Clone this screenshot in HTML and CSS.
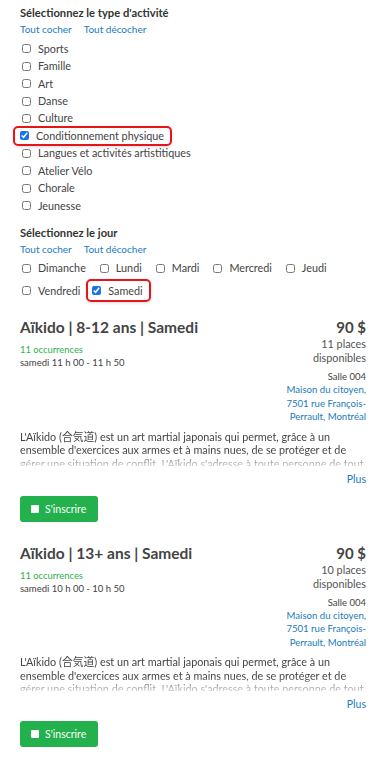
FILE: index.html
```html
<!DOCTYPE html>
<html lang="fr">

<head>
    <meta charset="UTF-8">
    <meta name="viewport" content="width=device-width, initial-scale=1.0">
    <title>Activités</title>
    <link rel="stylesheet" href="styles.css">
</head>

<body>
    <div class="page">
        <div class="filter">
            <h3 class="filter-title">Sélectionnez le type d'activité</h3>
            <div class="filter-links">
                <a href="#">Tout cocher</a>
                <a href="#">Tout décocher</a>
            </div>
            <ul class="option-list">
                <li><label class="option"><input type="checkbox">Sports</label></li>
                <li><label class="option"><input type="checkbox">Famille</label></li>
                <li><label class="option"><input type="checkbox">Art</label></li>
                <li><label class="option"><input type="checkbox">Danse</label></li>
                <li><label class="option"><input type="checkbox">Culture</label></li>
                <li><label class="option highlight"><input type="checkbox" checked>Conditionnement physique</label></li>
                <li><label class="option"><input type="checkbox">Langues et activités artistitiques</label></li>
                <li><label class="option"><input type="checkbox">Atelier Vélo</label></li>
                <li><label class="option"><input type="checkbox">Chorale</label></li>
                <li><label class="option"><input type="checkbox">Jeunesse</label></li>
            </ul>
        </div>

        <div class="filter">
            <h3 class="filter-title">Sélectionnez le jour</h3>
            <div class="filter-links">
                <a href="#">Tout cocher</a>
                <a href="#">Tout décocher</a>
            </div>
            <div class="day-list">
                <label class="option"><input type="checkbox">Dimanche</label>
                <label class="option"><input type="checkbox">Lundi</label>
                <label class="option"><input type="checkbox">Mardi</label>
                <label class="option"><input type="checkbox">Mercredi</label>
                <label class="option"><input type="checkbox">Jeudi</label>
                <label class="option"><input type="checkbox">Vendredi</label>
                <label class="option highlight"><input type="checkbox" checked>Samedi</label>
            </div>
        </div>

        <div class="course">
            <div class="course-head">
                <div class="course-main">
                    <h2 class="course-title">Aïkido | 8-12 ans | Samedi</h2>
                    <div class="occurrences">11 occurrences</div>
                    <div class="schedule">samedi 11 h 00 - 11 h 50</div>
                </div>
                <div class="course-side">
                    <div class="price">90 $</div>
                    <div class="places">11 places disponibles</div>
                    <div class="room">Salle 004</div>
                    <a class="address" href="#">Maison du citoyen, 7501 rue François-Perrault, Montréal</a>
                </div>
            </div>
            <p class="description">L'Aïkido (合気道) est un art martial japonais qui permet, grâce à un ensemble d'exercices aux armes et à mains nues, de se protéger et de gérer une situation de conflit. L'Aïkido s'adresse à toute personne de tout âge désirant apprendre.</p>
            <div class="more"><a href="#">Plus</a></div>
            <button class="register"><span class="register-box"></span>S'inscrire</button>
        </div>

        <div class="course">
            <div class="course-head">
                <div class="course-main">
                    <h2 class="course-title">Aïkido | 13+ ans | Samedi</h2>
                    <div class="occurrences">11 occurrences</div>
                    <div class="schedule">samedi 10 h 00 - 10 h 50</div>
                </div>
                <div class="course-side">
                    <div class="price">90 $</div>
                    <div class="places">10 places disponibles</div>
                    <div class="room">Salle 004</div>
                    <a class="address" href="#">Maison du citoyen, 7501 rue François-Perrault, Montréal</a>
                </div>
            </div>
            <p class="description">L'Aïkido (合気道) est un art martial japonais qui permet, grâce à un ensemble d'exercices aux armes et à mains nues, de se protéger et de gérer une situation de conflit. L'Aïkido s'adresse à toute personne de tout âge désirant apprendre.</p>
            <div class="more"><a href="#">Plus</a></div>
            <button class="register"><span class="register-box"></span>S'inscrire</button>
        </div>
    </div>
</body>

</html>
```

FILE: styles.css
```css
body {
    margin: 0;
    background-color: #fff;
    font-family: Lato, "Noto Sans CJK JP", sans-serif;
    color: #444;
}

a {
    color: #1a7bbd;
    text-decoration: none;
}

.page {
    padding: 5px 24px 0 20px;
}

.filter {
    margin-bottom: 11px;
}

.filter-title {
    margin: 0;
    font-size: 11.2px;
    font-weight: bold;
    color: #333;
    line-height: 16px;
}

.filter-links {
    font-size: 10px;
    line-height: 17px;
    display: flex;
    gap: 12px;
}

.option-list {
    list-style: none;
    margin: 2px 0 0;
    padding: 0;
}

.option-list li {
    display: flex;
    align-items: center;
    height: 17.45px;
}

.option {
    display: inline-flex;
    align-items: center;
    gap: 7px;
    font-size: 10.8px;
    line-height: 16px;
    color: #444;
    padding-left: 2px;
}

.option input {
    width: 9px;
    height: 9px;
    margin: 0;
    accent-color: #1a73e8;
}

.highlight {
    border: 2px solid #e8141b;
    border-radius: 5px;
    margin: 0 0 0 -7px;
    padding: 0 6px 0 5px;
    box-shadow: 0 1px 3px rgba(0, 0, 0, 0.15);
}

.day-list {
    display: flex;
    flex-wrap: wrap;
    align-items: center;
    column-gap: 12px;
    row-gap: 2px;
    padding-top: 1px;
}

.day-list .option {
    height: 18px;
}

.day-list .highlight {
    height: 19px;
    margin-left: -6px;
    padding-left: 4px;
}

.course {
    padding-top: 3px;
    margin-bottom: 17px;
}

.course-head {
    display: flex;
    justify-content: space-between;
}

.course-title {
    margin: 0;
    font-size: 15.5px;
    font-weight: bold;
    color: #444;
    line-height: 22px;
}

.occurrences {
    font-size: 9.4px;
    color: #2bb24c;
    margin-top: 5px;
    line-height: 13px;
}

.schedule {
    font-size: 9.5px;
    line-height: 13px;
}

.course-side {
    width: 82px;
    padding-top: 1px;
    text-align: right;
}

.price {
    font-size: 15px;
    font-weight: bold;
    line-height: 20px;
}

.places {
    font-size: 10.8px;
    line-height: 14px;
    color: #555;
}

.room {
    font-size: 9.5px;
    line-height: 13px;
    margin-top: 5px;
}

.address {
    display: block;
    font-size: 9.6px;
    line-height: 13.5px;
}

.description {
    margin: 6px 0 0;
    font-size: 10.8px;
    line-height: 13.5px;
    max-height: 36px;
    overflow: hidden;
    -webkit-mask-image: linear-gradient(to bottom, #000 60%, rgba(0, 0, 0, 0.25) 100%);
    mask-image: linear-gradient(to bottom, #000 60%, rgba(0, 0, 0, 0.25) 100%);
}

.more {
    text-align: right;
    font-size: 10.5px;
    line-height: 15px;
    margin-top: 6px;
}

.register {
    margin-top: 9px;
    display: inline-flex;
    align-items: center;
    gap: 6px;
    width: 78px;
    height: 26px;
    padding: 0 0 0 11px;
    background-color: #22b14c;
    color: #fff;
    border: none;
    border-radius: 3px;
    font-family: inherit;
    font-size: 10.5px;
    cursor: pointer;
}

.register-box {
    width: 8px;
    height: 8px;
    background-color: #fff;
    border-radius: 1px;
}
```
